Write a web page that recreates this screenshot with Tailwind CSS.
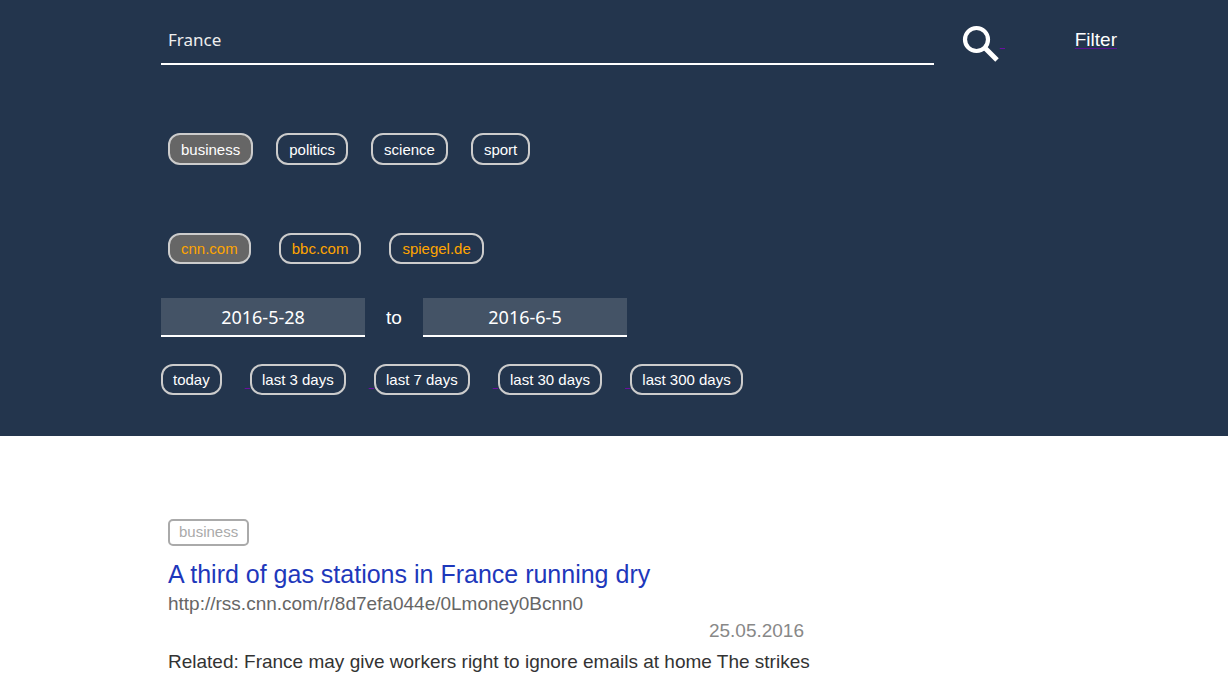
<!DOCTYPE html>
<html lang="en">
<head>
<meta charset="utf-8">
<meta name="viewport" content="width=device-width, initial-scale=1">
<title>News search</title>
<script src="https://cdn.jsdelivr.net/npm/@tailwindcss/browser@4"></script>
</head>
<body class="bg-white font-['Liberation_Sans',Arial,sans-serif] text-[19px] leading-6 text-[#333333]">
<header class="bg-[#23354d] px-4 pt-4 pb-[41px] text-white md:pr-[111px] md:pl-[161px]">
  <form>
    <div class="flex items-start">
      <input type="text" aria-label="Search" value="France" class="h-[49px] min-w-0 flex-1 border-b-2 border-white bg-transparent px-[7px] font-['Noto_Sans',sans-serif] text-[17px] text-[#eeeeee] outline-none">
      <a href="#search" aria-label="Search" class="mt-[9px] ml-[28px] flex w-[45px] shrink-0 items-start">
        <svg class="h-[38px] w-[38px] shrink-0" viewBox="0 0 38 38" fill="none" stroke="white"><circle cx="14.5" cy="14.5" r="11.5" stroke-width="4.2"/><path d="M22.5 22.5 35 35" stroke-width="5"/></svg><span class="mt-[2px] whitespace-pre underline decoration-[#6a0fa0] decoration-1 underline-offset-3">&nbsp;</span>
      </a>
      <a href="#filter" class="mt-[12px] ml-[68px] underline decoration-[#5c1392] decoration-1 underline-offset-2">Filter</a>
    </div>

    <div class="mt-[68px] flex flex-wrap gap-[23px] px-[7px] text-[15px] leading-[18px]">
      <button type="button" aria-pressed="true" class="rounded-xl border-2 border-[#cccccc] bg-[#666666] px-[11px] pt-[6px] pb-[4px]">business</button>
      <button type="button" aria-pressed="false" class="rounded-xl border-2 border-[#cccccc] px-[11px] pt-[6px] pb-[4px]">politics</button>
      <button type="button" aria-pressed="false" class="rounded-xl border-2 border-[#cccccc] px-[11px] pt-[6px] pb-[4px]">science</button>
      <button type="button" aria-pressed="false" class="rounded-xl border-2 border-[#cccccc] px-[11px] pt-[6px] pb-[4px]">sport</button>
    </div>

    <div class="mt-[68px] flex flex-wrap gap-[28px] px-[7px] text-[15px] leading-[17px] text-[#ffa500]">
      <button type="button" aria-pressed="true" class="rounded-xl border-2 border-[#cccccc] bg-[#666666] px-[11px] py-[5px]">cnn.com</button>
      <button type="button" aria-pressed="false" class="rounded-xl border-2 border-[#cccccc] px-[11px] py-[5px]">bbc.com</button>
      <button type="button" aria-pressed="false" class="rounded-xl border-2 border-[#cccccc] px-[11px] py-[5px]">spiegel.de</button>
    </div>

    <div class="mt-[34px] flex items-center">
      <input type="text" aria-label="From date" value="2016-5-28" class="h-[39px] w-[204px] min-w-0 border-b-2 border-white bg-[#445366] text-center font-['Noto_Sans',sans-serif] text-[18px] outline-none">
      <span class="w-[58px] shrink-0 text-center">to</span>
      <input type="text" aria-label="To date" value="2016-6-5" class="h-[39px] w-[204px] min-w-0 border-b-2 border-white bg-[#445366] text-center font-['Noto_Sans',sans-serif] text-[18px] outline-none">
    </div>

    <nav class="mt-[27px] flex flex-wrap gap-[23px]" aria-label="Date presets">
      <a href="#today" class="flex"><span class="rounded-xl border-2 border-[#cccccc] px-[10px] py-[5px] text-[15px] leading-[17px]">today</span></a>
      <a href="#3" class="flex items-center"><span class="whitespace-pre underline decoration-[#6a0fa0] decoration-1 underline-offset-2">&nbsp;</span><span class="rounded-xl border-2 border-[#cccccc] px-[10px] py-[5px] text-[15px] leading-[17px]">last 3 days</span></a>
      <a href="#7" class="flex items-center"><span class="whitespace-pre underline decoration-[#6a0fa0] decoration-1 underline-offset-2">&nbsp;</span><span class="rounded-xl border-2 border-[#cccccc] px-[10px] py-[5px] text-[15px] leading-[17px]">last 7 days</span></a>
      <a href="#30" class="flex items-center"><span class="whitespace-pre underline decoration-[#6a0fa0] decoration-1 underline-offset-2">&nbsp;</span><span class="rounded-xl border-2 border-[#cccccc] px-[10px] py-[5px] text-[15px] leading-[17px]">last 30 days</span></a>
      <a href="#300" class="flex items-center"><span class="whitespace-pre underline decoration-[#6a0fa0] decoration-1 underline-offset-2">&nbsp;</span><span class="rounded-xl border-2 border-[#cccccc] px-[10px] py-[5px] text-[15px] leading-[17px]">last 300 days</span></a>
    </nav>
  </form>
</header>

<main class="px-4 pt-[83px] md:pl-[168px]">
  <article class="max-w-[650px]">
    <span class="block w-fit rounded-[5px] border-2 border-[#aaaaaa] px-[9px] pt-[2px] pb-[4px] text-[15px] leading-[17px] text-[#aaaaaa]">business</span>
    <h2 class="mt-[12px] text-[25px] leading-8 text-[#1e38bb]"><a href="#article">A third of gas stations in France running dry</a></h2>
    <p class="mt-[2px] text-[#666666]">http://rss.cnn.com/r/8d7efa044e/0Lmoney0Bcnn0</p>
    <p class="mt-[3px] pr-[14px] text-right text-[#888888]">25.05.2016</p>
    <p class="mt-[7px]">Related: France may give workers right to ignore emails at home The strikes</p>
  </article>
</main>
</body>
</html>
